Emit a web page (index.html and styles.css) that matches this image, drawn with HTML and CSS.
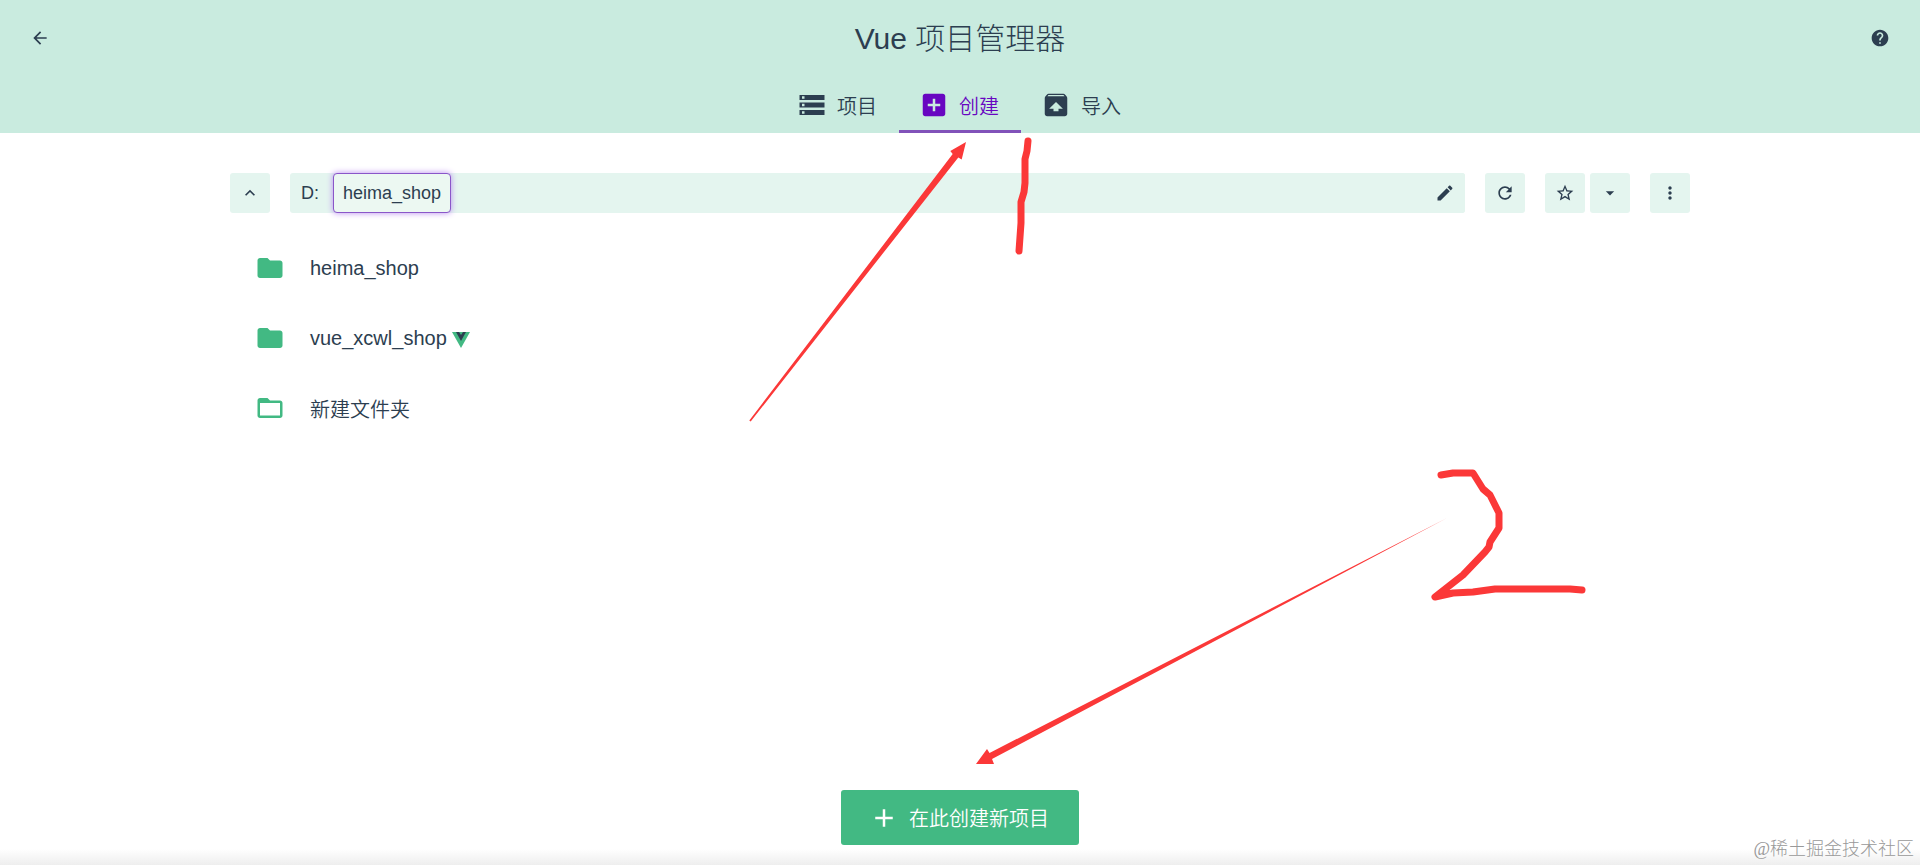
FILE: index.html
```html
<!DOCTYPE html>
<html lang="zh-CN">
<head>
  <meta charset="UTF-8">
  <title>Vue 项目管理器</title>
  <link rel="stylesheet" href="styles.css">
</head>
<body>
  <header class="header">
    <div class="top-bar">
      <button class="icon-btn flat" aria-label="返回">
        <svg class="icon" viewBox="0 0 24 24"><path d="M20 11H7.83l5.59-5.59L12 4l-8 8 8 8 1.41-1.41L7.83 13H20v-2z"/></svg>
      </button>
      <h1 class="title">Vue 项目管理器</h1>
      <button class="icon-btn flat" aria-label="帮助">
        <svg class="icon" viewBox="0 0 24 24"><path d="M12 2C6.48 2 2 6.48 2 12s4.48 10 10 10 10-4.480 10-10S17.520 2 12 2zm1 17h-2v-2h2v2zm2.070-7.750l-.9.920C13.450 12.900 13 13.500 13 15h-2v-.5c0-1.100.450-2.100 1.170-2.830l1.240-1.260c.370-.360.590-.860.590-1.410 0-1.100-.9-2-2-2s-2 .9-2 2H8c0-2.210 1.790-4 4-4s4 1.790 4 4c0 .880-.360 1.680-.930 2.250z"/></svg>
      </button>
    </div>
    <nav class="tabs">
      <a class="tab" href="#projects">
        <svg class="icon big" viewBox="0 0 24 24"><path d="M2 20h20v-4H2v4zm2-3h2v2H4v-2zM2 4v4h20V4H2zm4 3H4V5h2v2zm-4 7h20v-4H2v4zm2-3h2v2H4v-2z"/></svg>
        <span>项目</span>
      </a>
      <a class="tab active" href="#create">
        <svg class="icon big" viewBox="0 0 24 24"><path d="M19 3H5c-1.110 0-2 .9-2 2v14c0 1.100.890 2 2 2h14c1.100 0 2-.9 2-2V5c0-1.100-.9-2-2-2zm-2 10h-4v4h-2v-4H7v-2h4V7h2v4h4v2z"/></svg>
        <span>创建</span>
      </a>
      <a class="tab" href="#import">
        <svg class="icon big" viewBox="0 0 24 24"><path d="M20.550 5.220l-1.390-1.680C18.880 3.210 18.470 3 18 3H6c-.470 0-.880.210-1.150.550L3.460 5.220C3.170 5.570 3 6.010 3 6.500V19c0 1.100.890 2 2 2h14c1.100 0 2-.9 2-2V6.500c0-.490-.170-.930-.450-1.280zM12 9.500l5.500 5.500H14v2h-4v-2H6.500L12 9.500zM5.120 5l.820-1h12l.930 1H5.120z"/></svg>
        <span>导入</span>
      </a>
    </nav>
  </header>

  <main class="content">
    <div class="toolbar">
      <button class="icon-btn" aria-label="上级文件夹">
        <svg class="icon" viewBox="0 0 24 24"><path d="M7.410 15.410L12 10.830l4.590 4.580L18 14l-6-6-6 6z"/></svg>
      </button>
      <div class="path-bar">
        <button class="path-part">D:</button>
        <button class="path-part current">heima_shop</button>
        <button class="icon-btn edit" aria-label="编辑路径">
          <svg class="icon" viewBox="0 0 24 24"><path d="M3 17.250V21h3.750L17.810 9.940l-3.750-3.750L3 17.250zM20.710 7.040c.390-.390.390-1.020 0-1.410l-2.340-2.340c-.390-.390-1.020-.390-1.410 0l-1.830 1.830 3.750 3.750 1.830-1.830z"/></svg>
        </button>
      </div>
      <button class="icon-btn" aria-label="刷新">
        <svg class="icon" viewBox="0 0 24 24"><path d="M17.650 6.350C16.200 4.900 14.210 4 12 4c-4.420 0-7.990 3.580-7.990 8s3.570 8 7.990 8c3.730 0 6.840-2.550 7.730-6h-2.080c-.820 2.330-3.040 4-5.650 4-3.310 0-6-2.690-6-6s2.690-6 6-6c1.660 0 3.140.690 4.220 1.780L13 11h7V4l-2.350 2.350z"/></svg>
      </button>
      <div class="btn-group">
        <button class="icon-btn" aria-label="收藏">
          <svg class="icon" viewBox="0 0 24 24"><path d="M22 9.240l-7.190-.620L12 2 9.190 8.630 2 9.240l5.460 4.730L5.820 21 12 17.270 18.180 21l-1.630-7.030L22 9.240zM12 15.400l-3.760 2.270 1-4.280-3.320-2.880 4.380-.380L12 6.100l1.710 4.040 4.380.380-3.320 2.880 1 4.280L12 15.400z"/></svg>
        </button>
        <button class="icon-btn" aria-label="收藏夹">
          <svg class="icon" viewBox="0 0 24 24"><path d="M7 10l5 5 5-5z"/></svg>
        </button>
      </div>
      <button class="icon-btn" aria-label="更多">
        <svg class="icon" viewBox="0 0 24 24"><path d="M12 8c1.100 0 2-.9 2-2s-.9-2-2-2-2 .9-2 2 .9 2 2 2zm0 2c-1.100 0-2 .9-2 2s.9 2 2 2 2-.9 2-2-.9-2-2-2zm0 6c-1.100 0-2 .9-2 2s.9 2 2 2 2-.9 2-2-.9-2-2-2z"/></svg>
      </button>
    </div>

    <ul class="folders">
      <li class="folder">
        <svg class="icon big" viewBox="0 0 24 24"><path d="M10 4H4c-1.100 0-1.990.9-1.990 2L2 18c0 1.100.9 2 2 2h16c1.100 0 2-.9 2-2V8c0-1.100-.9-2-2-2h-8l-2-2z"/></svg>
        <span>heima_shop</span>
      </li>
      <li class="folder">
        <svg class="icon big" viewBox="0 0 24 24"><path d="M10 4H4c-1.100 0-1.990.9-1.990 2L2 18c0 1.100.9 2 2 2h16c1.100 0 2-.9 2-2V8c0-1.100-.9-2-2-2h-8l-2-2z"/></svg>
        <span>vue_xcwl_shop</span>
        <svg class="vue-logo" viewBox="0 0 18 16"><path fill="#42b983" d="M0 0h18L9 16z"/><path fill="#2c3e50" d="M4 0h3l2 3 2-3h3L9 9z"/></svg>
      </li>
      <li class="folder">
        <svg class="icon big" viewBox="0 0 24 24"><path d="M20 6h-8l-2-2H4c-1.100 0-1.990.9-1.990 2L2 18c0 1.100.9 2 2 2h16c1.100 0 2-.9 2-2V8c0-1.100-.9-2-2-2zm0 12H4V8h16v10z"/></svg>
        <span>新建文件夹</span>
      </li>
    </ul>
  </main>

  <footer class="actions">
    <button class="create-btn">
      <svg class="icon big" viewBox="0 0 24 24"><path d="M19 13h-6v6h-2v-6H5v-2h6V5h2v6h6v2z"/></svg>
      <span>在此创建新项目</span>
    </button>
  </footer>

  <!-- step markers over the page -->
  <svg class="marks" viewBox="0 0 1920 865">
    <path class="arrow" d="M749.300 420.500L952.700 154l-2.400-3 15.700-9-4.300 17.500-3.400-2L750.700 421.500z"/>
    <path class="arrow" d="M1447 518L989.500 753l-2.500-4-11 15h18l-2-5z"/>
    <path class="pen" d="M1028 141l-1 10-2 8v24l-1 9-3 10v21l-2 28"/>
    <path class="pen" d="M1441 475l12-2h20l10 16 7 6 9 18v15l-9 14-1 5-4 5-22 23-28 22 18-4 20-1 22-3h75l12 1"/>
  </svg>
  <div class="watermark">@稀土掘金技术社区</div>
</body>
</html>
```

FILE: styles.css
```css
* { box-sizing: border-box; }
body {
  margin: 0;
  min-height: 100vh;
  position: relative;
  display: flex;
  flex-direction: column;
  font-family: "Liberation Sans", "Noto Sans CJK SC", sans-serif;
  font-size: 20px;
  font-weight: 350;
  color: #2c3e50;
  background: #fff;
}
button {
  font: inherit;
  color: inherit;
  border: none;
  padding: 0;
  cursor: pointer;
}
.icon {
  width: 20px;
  height: 20px;
  flex: none;
  fill: currentColor;
}
.icon.big {
  width: 30px;
  height: 30px;
}
.header {
  background: #c9ebdf;
}
.top-bar {
  display: flex;
  align-items: center;
  justify-content: space-between;
  height: 76px;
  padding: 0 20px;
}
.title {
  margin: 0;
  padding-bottom: 4px;
  font-size: 30px;
  font-weight: 300;
}
.icon-btn {
  width: 40px;
  height: 40px;
  display: flex;
  align-items: center;
  justify-content: center;
  background: #e4f5ef;
  border-radius: 3px;
}
.icon-btn.flat {
  background: none;
}
.tabs {
  display: flex;
  justify-content: center;
}
.tab {
  display: flex;
  align-items: center;
  gap: 10px;
  height: 57px;
  padding: 4px 22px 0 20px;
  border-bottom: 3px solid transparent;
  color: #2c3e50;
  text-decoration: none;
}
.tab.active {
  color: #6806c1;
  border-bottom-color: #8152b9;
}
.content {
  flex: 1;
  width: 100%;
  max-width: 1500px;
  margin: 0 auto;
  padding: 40px 20px 0;
}
.toolbar {
  display: flex;
  gap: 20px;
}
.path-bar {
  flex: 1;
  display: flex;
  gap: 3px;
  background: #e4f5ef;
  border-radius: 3px;
}
.path-part {
  padding: 0 11px;
  font-size: 18px;
  background: none;
}
.path-part.current {
  padding: 0 9px;
  background: #ecf8f2;
  border: 1px solid #8a56c9;
  border-radius: 4px;
  box-shadow: 0 0 6px #b98cf0;
}
.edit {
  margin-left: auto;
}
.btn-group {
  display: flex;
  gap: 5px;
}
.folders {
  list-style: none;
  margin: 20px 0 0;
  padding: 0;
}
.folder {
  display: flex;
  align-items: center;
  height: 70px;
  padding: 0 25px;
}
.folder .icon {
  margin-right: 25px;
  color: #42b983;
}
.vue-logo {
  width: 18px;
  height: 16px;
  margin: 4px 0 0 5px;
}
.actions {
  display: flex;
  justify-content: center;
  padding: 20px;
  background: linear-gradient(to top, #eee, #fff 16px);
}
.create-btn {
  display: flex;
  align-items: center;
  gap: 10px;
  height: 55px;
  padding: 0 30px 0 28px;
  color: #fff;
  background: #42b983;
  border-radius: 3px;
}
.marks {
  position: absolute;
  top: 0;
  left: 0;
  width: 100%;
  height: 100%;
  pointer-events: none;
}
.arrow {
  fill: #fb3838;
}
.pen {
  fill: none;
  stroke: #fb3838;
  stroke-width: 7;
  stroke-linecap: round;
  stroke-linejoin: round;
}
.watermark {
  position: absolute;
  right: 6px;
  bottom: 4px;
  font-family: "Liberation Serif", "Noto Sans CJK SC", serif;
  font-size: 18px;
  font-weight: 300;
  line-height: 24px;
  color: #999;
}
```
